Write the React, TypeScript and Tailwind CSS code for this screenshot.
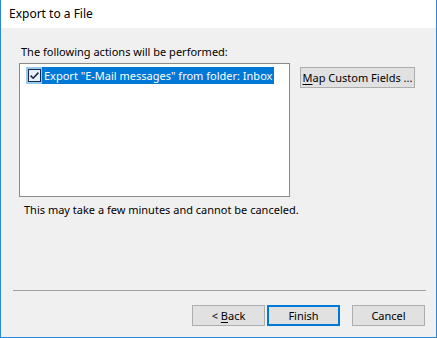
import React from "react";

const font = { fontFamily: '"Noto Sans", "Open Sans", sans-serif' };

export default function App() {
  return (
    <div
      className="w-[437px] h-[338px] flex flex-col border-l border-r border-b border-[#2b87d3] bg-[#f0f0f0] text-[11px] text-[#000] overflow-hidden"
      style={font}
    >
      <div className="h-[28px] bg-white flex items-center pl-[8px] shrink-0 text-[12px]">
        <span className="leading-[16px]">Export to a File</span>
      </div>
      <div className="flex-1 flex flex-col pl-[18px] pt-[16px]">
        <div className="leading-[16px] pl-[2px]">The following actions will be performed:</div>
        <div className="flex mt-[3px]">
          <div className="w-[271px] h-[134px] border border-[#8a8a8a] bg-white pt-[3px] pl-[6px]">
            <div className="flex h-[17px] w-[248px]">
              <div className="w-[16px] h-[17px] bg-[#99c9ef] flex items-center justify-center">
                <svg width="13" height="13" viewBox="0 0 13 13">
                  <rect x="0.5" y="0.5" width="12" height="12" fill="#e6f1fb" stroke="#1c2a4a" />
                  <path d="M2.6 6.6 L5.2 9.2 L10.4 3.6" fill="none" stroke="#1c2a4a" strokeWidth="1.6" />
                </svg>
              </div>
              <div className="flex-1 bg-[#0078d7] text-white leading-[17px] pl-[2px] whitespace-nowrap">
                Export "E-Mail messages" from folder: Inbox
              </div>
            </div>
          </div>
          <button className="ml-[10px] mt-[4px] w-[115px] h-[21px] border border-[#adadad] bg-[#e1e1e1] leading-[19px] text-center whitespace-nowrap">
            <span className="underline underline-offset-2">M</span>ap Custom Fields ...
          </button>
        </div>
        <div className="leading-[16px] mt-[5px] pl-[5px]">This may take a few minutes and cannot be canceled.</div>
        <div className="mt-auto ml-[-6px] mr-[10px] h-px bg-[#a0a0a0]" />
        <div className="flex mt-[14px] mb-[11px] pl-[173px]">
          <button className="w-[73px] h-[21px] border border-[#adadad] bg-[#e1e1e1] leading-[19px] text-center">
            &lt; <span className="underline underline-offset-2">B</span>ack
          </button>
          <button className="ml-[2px] w-[73px] h-[21px] border-2 border-[#0078d7] bg-[#e1e1e1] leading-[17px] text-center">
            Finish
          </button>
          <button className="ml-[12px] w-[73px] h-[21px] border border-[#adadad] bg-[#e1e1e1] leading-[19px] text-center">
            Cancel
          </button>
        </div>
      </div>
    </div>
  );
}
